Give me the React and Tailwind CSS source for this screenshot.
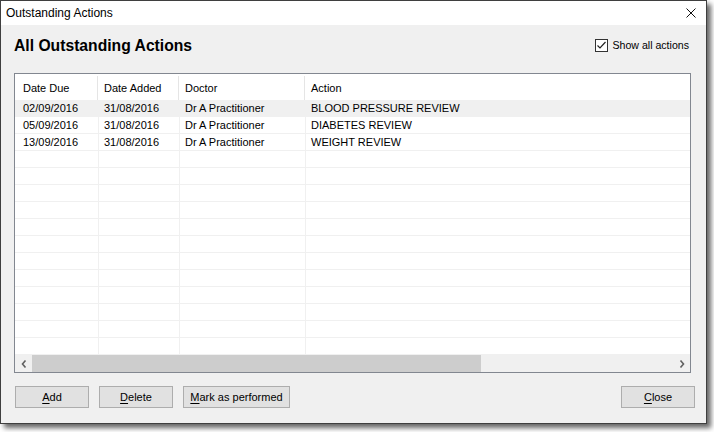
const actions = [
  { due: '02/09/2016', added: '31/08/2016', doctor: 'Dr A Practitioner', action: 'BLOOD PRESSURE REVIEW' },
  { due: '05/09/2016', added: '31/08/2016', doctor: 'Dr A Practitioner', action: 'DIABETES REVIEW' },
  { due: '13/09/2016', added: '31/08/2016', doctor: 'Dr A Practitioner', action: 'WEIGHT REVIEW' },
];

const rows = Array.from({ length: 15 }, (_, i) => actions[i] || null);

const Button = ({ width, mnemonic, rest }) => (
  <button
    type="button"
    className={`${width} h-[22px] bg-[#e1e1e1] border border-[#adadad] text-[11px] leading-[20px] text-black flex items-center justify-center`}
  >
    <span className="underline underline-offset-[2px]">{mnemonic}</span>
    {rest}
  </button>
);

const App = () => {
  return (
    <div className="w-[714px] h-[432px] bg-white font-['Liberation_Sans',Arial,sans-serif] text-black">
      <div className="w-[707px] h-[424px] border border-[#3f3f3f] flex flex-col shadow-[4px_4px_5px_rgba(0,0,0,0.6)]">
        {/* title bar */}
        <div className="h-[24px] bg-white flex items-center justify-between pl-[5px] pr-[10px]">
          <span className="text-[12px] leading-[16px]">Outstanding Actions</span>
          <svg width="10" height="10" viewBox="0 0 10 10">
            <path d="M0.5 0.5 L9.5 9.5 M9.5 0.5 L0.5 9.5" stroke="#111" strokeWidth="1" fill="none" />
          </svg>
        </div>

        <div className="flex-1 bg-[#f0f0f0] pl-[13px] flex flex-col">
          <div className="h-[48px] flex items-start justify-between pr-[17px]">
            <h1 className="mt-[11px] text-[15.7px] leading-[20px] font-bold">All Outstanding Actions</h1>
            <label className="mt-[13px] flex items-center gap-[4px]">
              <span className="w-[13px] h-[13px] border border-[#333] bg-white flex items-center justify-center">
                <svg width="11" height="11" viewBox="0 0 11 11">
                  <path d="M1.5 5.5 L4 8 L9.5 2" stroke="#222" strokeWidth="1.2" fill="none" />
                </svg>
              </span>
              <span className="text-[10.6px] leading-[14px]">Show all actions</span>
            </label>
          </div>

          {/* list view */}
          <div className="w-[677px] h-[300px] border border-[#828790] bg-white flex flex-col overflow-hidden">
            <div className="h-[26px] flex items-center text-[11px] pt-[2px] shrink-0">
              <div className="w-[83px] h-full border-r border-[#e5e5e5] pl-[8px] flex items-center">Date Due</div>
              <div className="w-[81px] h-full border-r border-[#e5e5e5] pl-[6px] flex items-center">Date Added</div>
              <div className="w-[126px] h-full border-r border-[#e5e5e5] pl-[6px] flex items-center">Doctor</div>
              <div className="flex-1 h-full pl-[6px] flex items-center">Action</div>
            </div>
            <div className="flex-1">
              {rows.map((row, i) => (
                <div
                  key={i}
                  className={`h-[17px] flex border-b border-[#f0f0f0] text-[11px] leading-[17px] ${i === 0 ? 'bg-[#f0f0f0]' : ''}`}
                >
                  <div className="w-[84px] border-r border-[#f0f0f0] pl-[8px] whitespace-nowrap">{row?.due}</div>
                  <div className="w-[81px] border-r border-[#f0f0f0] pl-[5px] whitespace-nowrap">{row?.added}</div>
                  <div className="w-[126px] border-r border-[#f0f0f0] pl-[5px] whitespace-nowrap">{row?.doctor}</div>
                  <div className="flex-1 pl-[5px] whitespace-nowrap">{row?.action}</div>
                </div>
              ))}
            </div>
            {/* horizontal scrollbar */}
            <div className="h-[17px] flex bg-[#f0f0f0] shrink-0">
              <div className="w-[17px] flex items-center justify-center">
                <svg width="6" height="8" viewBox="0 0 6 8">
                  <path d="M4.5 0.5 L1.5 4 L4.5 7.5" stroke="#606060" strokeWidth="1.6" fill="none" />
                </svg>
              </div>
              <div className="w-[449px] bg-[#cdcdcd]" />
              <div className="flex-1" />
              <div className="w-[17px] flex items-center justify-center">
                <svg width="6" height="8" viewBox="0 0 6 8">
                  <path d="M1.5 0.5 L4.5 4 L1.5 7.5" stroke="#606060" strokeWidth="1.6" fill="none" />
                </svg>
              </div>
            </div>
          </div>

          {/* buttons */}
          <div className="mt-[13px] ml-[1px] w-[680px] flex items-center">
            <div className="flex gap-[10px]">
              <Button width="w-[74px]" mnemonic="A" rest="dd" />
              <Button width="w-[74px]" mnemonic="D" rest="elete" />
              <Button width="w-[107px]" mnemonic="M" rest="ark as performed" />
            </div>
            <div className="ml-auto">
              <Button width="w-[74px]" mnemonic="C" rest="lose" />
            </div>
          </div>
        </div>
      </div>
    </div>
  );
};

export default App;
